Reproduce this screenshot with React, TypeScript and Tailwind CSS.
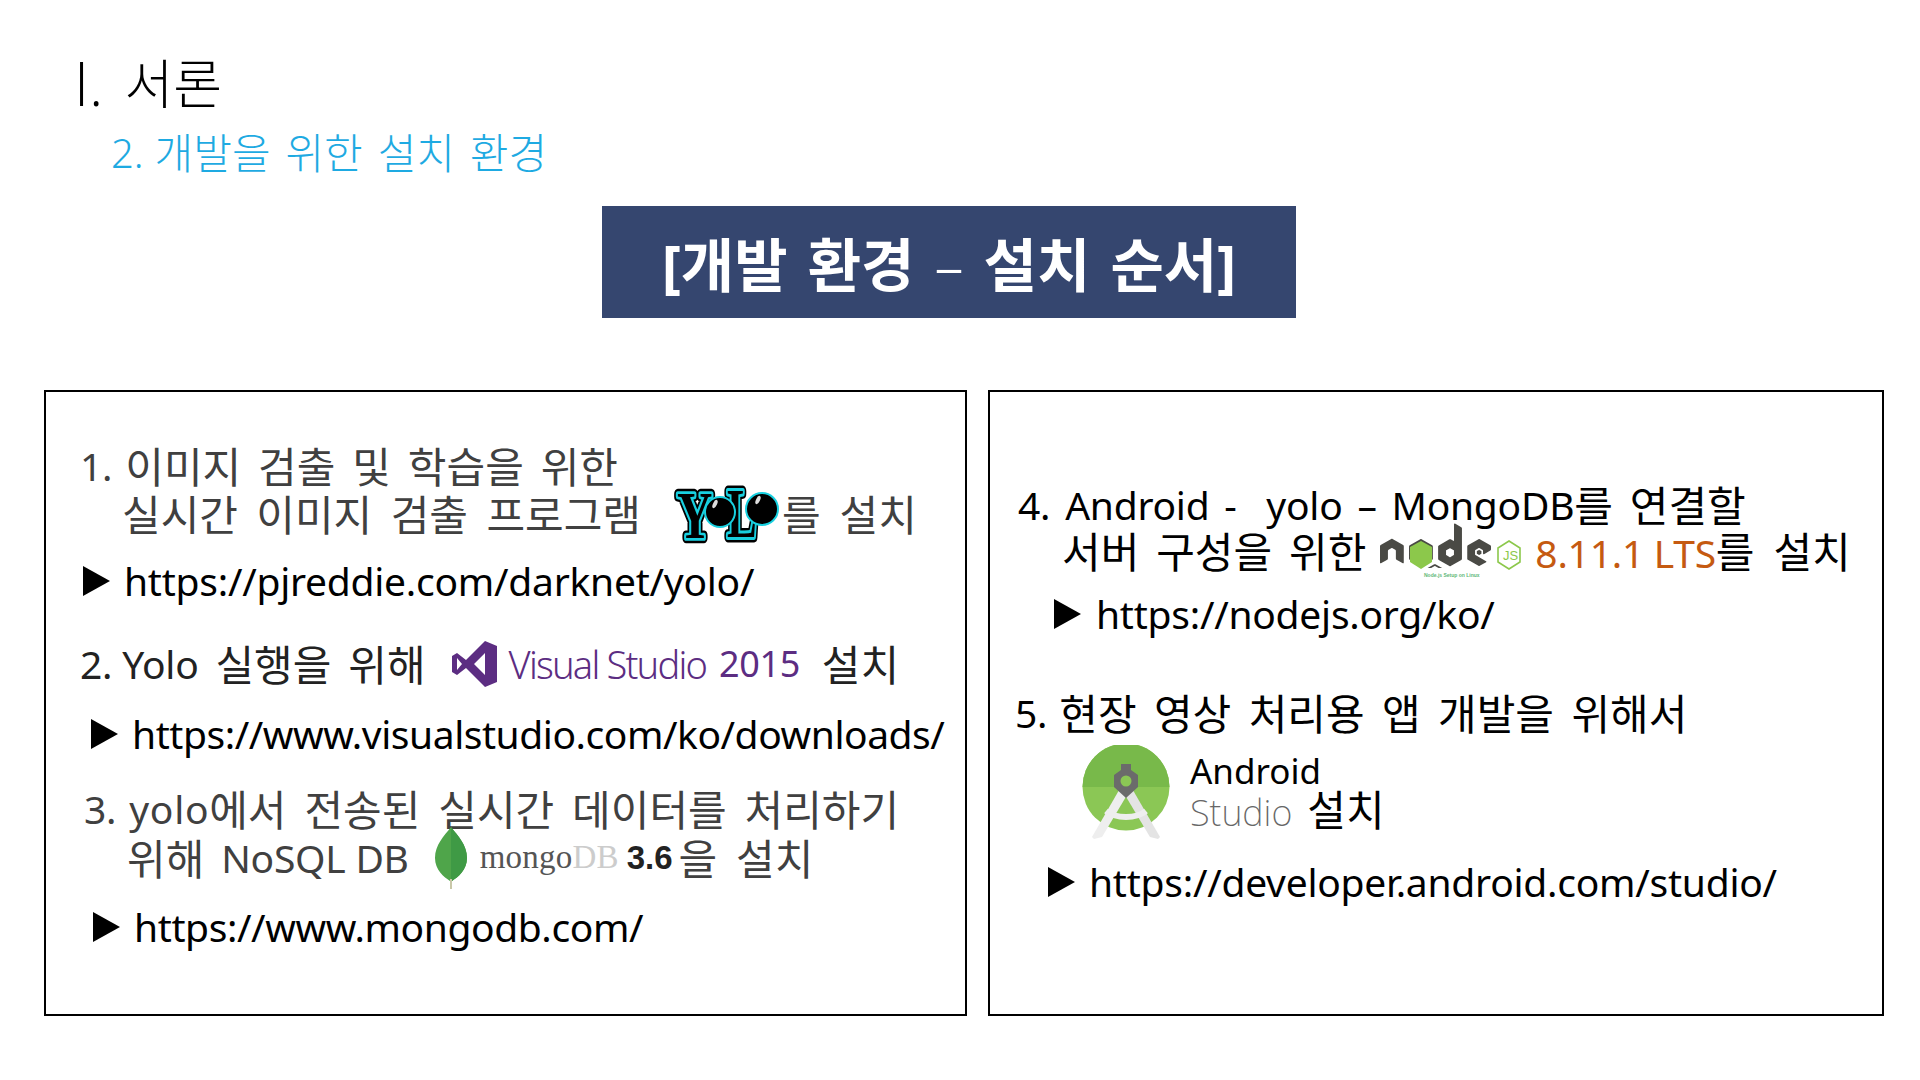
import React from "react";
import { FaNode } from "react-icons/fa";

const font = { fontFamily: '"Noto Sans", "Noto Sans CJK KR", sans-serif' };

function Arrow() {
  return (
    <svg width="27" height="30" viewBox="0 0 27 30" className="shrink-0">
      <polygon points="0,0 27,15 0,30" fill="#000" />
    </svg>
  );
}

function L({ children, className = "tracking-[-0.25px]" }: { children: React.ReactNode; className?: string }) {
  return <span className={`text-[39px] [word-spacing:0] ${className}`}>{children}</span>;
}

function Yolo() {
  const glyph = (ch: string, x: number, y: number, sx: number, sy: number) => (
    <g transform={`translate(${x} ${y}) scale(${sx} ${sy})`}>
      <text fontFamily="Liberation Serif" fontWeight="700" fontSize="72" fill="#000" stroke="#000" strokeWidth="11" strokeLinejoin="round">{ch}</text>
      <text fontFamily="Liberation Serif" fontWeight="700" fontSize="72" fill="#000" stroke="#18d0e0" strokeWidth="6" strokeLinejoin="round">{ch}</text>
      <text fontFamily="Liberation Serif" fontWeight="700" fontSize="72" fill="#000">{ch}</text>
    </g>
  );
  return (
    <svg width="106" height="56" viewBox="0 0 106 56" className="shrink-0 overflow-visible">
      {glyph("Y", 3, 52, 0.68, 0.95)}
      {glyph("L", 53, 51, 0.62, 0.98)}
      <circle cx="46" cy="26" r="15" fill="#000" stroke="#18d0e0" strokeWidth="2" />
      <circle cx="88" cy="23" r="16" fill="#000" stroke="#18d0e0" strokeWidth="2" />
      <ellipse cx="41" cy="18" rx="2" ry="4.5" fill="#ddd" transform="rotate(25 41 18)" />
      <ellipse cx="84" cy="14" rx="2" ry="4.5" fill="#ddd" transform="rotate(25 84 14)" />
    </svg>
  );
}

function VsIcon() {
  return (
    <svg width="46" height="46" viewBox="0 0 46 46" className="shrink-0">
      <path fill="#5c2d82" fillRule="evenodd" d="M33 0 L45 5 V41 L33 46 L14 27 L5 34 L0 31 V15 L5 12 L14 19 Z M33 12 L22 23 L33 34 Z M5 17 V29 L10 23 Z" />
    </svg>
  );
}

function Leaf() {
  return (
    <svg width="34" height="62" viewBox="0 0 34 62" className="shrink-0">
      <path d="M17 0 C24 9 33 18 33 31 C33 43 24 50 18 54 L16 54 C10 50 1 43 1 31 C1 18 10 9 17 0 Z" fill="#4fa54a" />
      <path d="M17 0 C24 9 33 18 33 31 C33 43 24 50 18 54 L17 54 Z" fill="#3f9a45" />
      <rect x="16" y="52" width="2" height="10" fill="#c9c7a8" />
    </svg>
  );
}

function Node() {
  return (
    <div className="relative w-[141px] h-[56px] shrink-0 [word-spacing:0]">
      <div className="absolute left-0 top-0 w-[112px] h-[45px] overflow-hidden">
        <FaNode size={111} color="#4a4a45" className="absolute left-0 top-[-21px]" />
      </div>
      <svg width="141" height="60" viewBox="0 0 141 60" className="absolute left-0 top-0">
        <polygon points="41,18 52,24 52,39 41,46 30,39 30,24" fill="#8cc84b" />
        <polygon points="129,18 140,25 140,39 129,46 118,39 118,25" fill="none" stroke="#8cc84b" strokeWidth="1.6" />
        <text x="123" y="37" fontSize="13" fontFamily="Liberation Sans" fill="#8cc84b">JS</text>
        <text x="44" y="54" fontSize="5" fontWeight="700" fontFamily="Liberation Sans" fill="#5fb878">Node.js Setup on Linux</text>
      </svg>
    </div>
  );
}

function AndroidLogo() {
  return (
    <svg width="90" height="94" viewBox="0 0 90 94" className="shrink-0">
      <circle cx="44" cy="42" r="43.5" fill="#8bc755" />
      <path d="M0.5 42 A43.5 43.5 0 0 1 87.5 42 Z" fill="#78b94a" />
      <path d="M10 92 L40 40 L48 45 L20 92 L12 94 Z" fill="#eeeeee" />
      <path d="M78 92 L48 40 L40 45 L68 92 L76 94 Z" fill="#e4e4e4" />
      <path d="M24 66 C34 74 54 74 64 66" fill="none" stroke="#eeeeee" strokeWidth="6" />
      <path d="M39 19 H49 V25 L56 30 V42 L44 53 L32 42 V30 L39 25 Z" fill="#6b6b6b" />
      <circle cx="44" cy="36" r="5.5" fill="#8bc755" />
    </svg>
  );
}

function Row({ className = "", children }: { className?: string; children: React.ReactNode }) {
  return <div className={`flex items-center h-12 whitespace-nowrap shrink-0 ${className}`}>{children}</div>;
}

export default function App() {
  return (
    <div className="w-[1920px] h-[1080px] bg-white overflow-hidden flex flex-col" style={font}>
      <div className="h-[206px] shrink-0 flex flex-col">
        <div className="mt-[51px] ml-[74px] h-[64px] flex items-center text-[53px] font-light text-black leading-none">
          <span className="text-[60px]" style={{ fontFamily: '"Open Sans", sans-serif' }}>I.</span><span className="ml-[21px]">서론</span>
        </div>
        <div className="mt-[10px] ml-[111px] flex text-[42px] leading-[56px] font-light text-[#1eaae2] [word-spacing:4px]"><span className="text-[40px]">2.</span><span className="ml-[11px]">개발을 위한 설치 환경</span></div>
      </div>
      <div className="ml-[602px] w-[694px] h-[112px] shrink-0 bg-[#35466f] flex items-center justify-center pt-[6px] text-white font-bold text-[58px] leading-none [word-spacing:5px]">
        <span>[개발 환경 <span className="font-light">–</span> 설치 순서]</span>
      </div>
      <div className="mt-[72px] ml-[44px] flex gap-[21px] h-[626px] shrink-0">
        <div className="w-[923px] border-2 border-black flex flex-col pt-[50px] text-[42px]">
          <Row className="ml-[34px] text-[#404040] [word-spacing:6px]"><L>1.</L><span className="ml-[13px]">이미지 검출 및 학습을 위한</span></Row>
          <Row className="ml-[76px] text-[#404040] [word-spacing:7.5px]">
            실시간 이미지 검출 프로그램
            <span className="ml-[33px] -my-2 flex"><Yolo /></span>
            <span className="ml-[2px] [word-spacing:8px]">를 설치</span>
          </Row>
          <Row className="mt-[19px] ml-[37px] gap-[14px] text-black"><Arrow /><L>https://pjreddie.com/darknet/yolo/</L></Row>
          <Row className="mt-[35px] ml-[34px] text-[#222] [word-spacing:6px]">
            <L>2. Yolo</L>&nbsp;실행을 위해
            <span className="ml-[26px] flex"><VsIcon /></span>
            <span className="ml-[11px] text-[38px] text-[#5c2d82] font-light tracking-[-1.8px] [word-spacing:0]">Visual Studio</span>
            <span className="ml-[13px] text-[36px] text-[#5c2d82] tracking-[-0.4px]">2015</span>
            <span className="ml-[22px]">설치</span>
          </Row>
          <Row className="mt-[22px] ml-[45px] gap-[14px] text-black"><Arrow /><L className="tracking-[-0.45px]">https://www.visualstudio.com/ko/downloads/</L></Row>
          <Row className="mt-[27px] ml-[38px] text-[#404040] [word-spacing:7px]"><L>3.</L><L className="ml-[13px] tracking-[0.7px]">yolo</L>에서 전송된 실시간 데이터를 처리하기</Row>
          <Row className="mt-[1px] ml-[81px] text-[#404040] [word-spacing:6px]">
            위해&nbsp;<L>NoSQL DB</L>
            <span className="ml-[25px] -my-2 flex"><Leaf /></span>
            <span className="ml-[12px] text-[33px] text-[#555] tracking-[0.2px]" style={{ fontFamily: '"Liberation Serif", serif' }}>mongo<span className="text-[#ccc]">DB</span></span>
            <span className="ml-[8px] text-[33px] font-bold text-[#222]" style={{ fontFamily: '"Liberation Sans", sans-serif' }}>3.6</span>
            <span className="ml-[6px] [word-spacing:8px]">을 설치</span>
          </Row>
          <Row className="mt-[21px] ml-[47px] gap-[14px] text-black"><Arrow /><L className="tracking-[-0.4px]">https://www.mongodb.com/</L></Row>
        </div>
        <div className="w-[896px] border-2 border-black flex flex-col pt-[89px] text-[42px] text-black">
          <Row className="ml-[28px] [word-spacing:6px]"><span className="text-[39px] tracking-[-0.25px] [word-spacing:5px]">4. Android -&nbsp;&nbsp;yolo – MongoDB</span>를 연결할</Row>
          <Row className="-mt-[2px] ml-[72px] [word-spacing:6px]">
            서버 구성을 위한
            <span className="ml-[14px] flex"><Node /></span>
            <span className="ml-[14px] text-[#c55a11]"><L>8.11.1 LTS</L></span>
            <span className="[word-spacing:8px]">를 설치</span>
          </Row>
          <Row className="mt-[15px] ml-[64px] gap-[15px]"><Arrow /><L>https://nodejs.org/ko/</L></Row>
          <Row className="mt-[51px] ml-[25px] [word-spacing:6.5px]"><L>5.</L><span className="ml-[12px]">현장 영상 처리용 앱 개발을 위해서</span></Row>
          <div className="mt-[8px] ml-[92px] flex h-[92px] shrink-0">
            <AndroidLogo />
            <div className="ml-[18px] flex flex-col">
              <div className="h-[50px] flex items-center text-[35px] leading-none">Android</div>
              <div className="-mt-[3px] h-[42px] flex items-center whitespace-nowrap">
                <span className="text-[36px] font-extralight text-[#666]">Studio</span>
                <span className="ml-[15px] -mt-[7px]">설치</span>
              </div>
            </div>
          </div>
          <Row className="mt-[21px] ml-[58px] gap-[14px]"><Arrow /><L>https://developer.android.com/studio/</L></Row>
        </div>
      </div>
    </div>
  );
}
